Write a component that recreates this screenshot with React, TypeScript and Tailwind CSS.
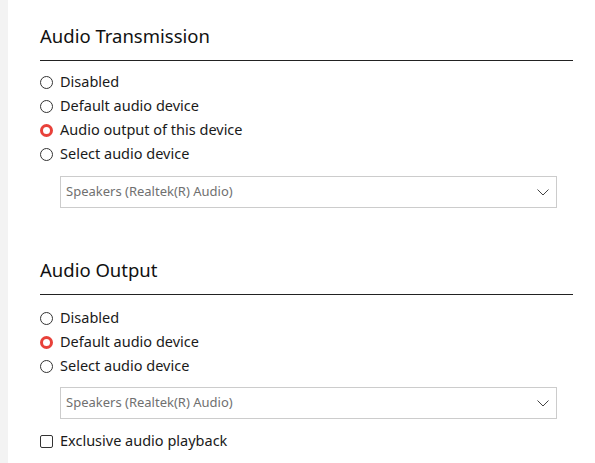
import React from 'react';

const font = { fontFamily: '"Noto Sans", "Open Sans", sans-serif' };

const Radio = ({ label, checked }: { label: string; checked?: boolean }) => (
  <label className="flex h-6 items-center gap-[7px] text-[14.5px] text-[#1a1a1a]">
    {checked ? (
      <span className="box-border h-[13px] w-[13px] rounded-full border-[3.5px] border-[#e8413a] bg-white" />
    ) : (
      <span className="box-border h-[13px] w-[13px] rounded-full border border-[#333] bg-white" />
    )}
    <span>{label}</span>
  </label>
);

const Select = () => (
  <div className="ml-5 mr-4 flex h-8 items-center justify-between border border-[#cccccc] bg-white pl-[5px] pr-[7px]">
    <span className="text-[13px] text-[#707070]">Speakers (Realtek(R) Audio)</span>
    <svg width="12" height="7" viewBox="0 0 12 7" fill="none">
      <path d="M0.5 0.5 L6 6 L11.5 0.5" stroke="#444" strokeWidth="1" />
    </svg>
  </div>
);

const Heading = ({ children }: { children: string }) => (
  <div className="border-b border-[#222] pb-[10px]">
    <h2 className="text-[18.5px] leading-7 text-[#111]">{children}</h2>
  </div>
);

export default function App() {
  return (
    <div className="flex h-[463px] w-[595px] overflow-hidden bg-white" style={font}>
      <div className="w-2 shrink-0 bg-[#f3f3f3]" />
      <div className="flex-1 pl-8 pr-[22px] pt-[22px]">
        <Heading>Audio Transmission</Heading>
        <div className="mt-[9px]">
          <Radio label="Disabled" />
          <Radio label="Default audio device" />
          <Radio label="Audio output of this device" checked />
          <Radio label="Select audio device" />
        </div>
        <div className="mt-[10px]">
          <Select />
        </div>

        <div className="mt-[48px]">
          <Heading>Audio Output</Heading>
        </div>
        <div className="mt-[11px]">
          <Radio label="Disabled" />
          <Radio label="Default audio device" checked />
          <Radio label="Select audio device" />
        </div>
        <div className="mt-[9px]">
          <Select />
        </div>
        <label className="mt-[10px] flex h-6 items-center gap-[7px] text-[14.5px] text-[#1a1a1a]">
          <span className="box-border h-[13px] w-[13px] rounded-[2px] border border-[#333] bg-white" />
          <span>Exclusive audio playback</span>
        </label>
      </div>
    </div>
  );
}
